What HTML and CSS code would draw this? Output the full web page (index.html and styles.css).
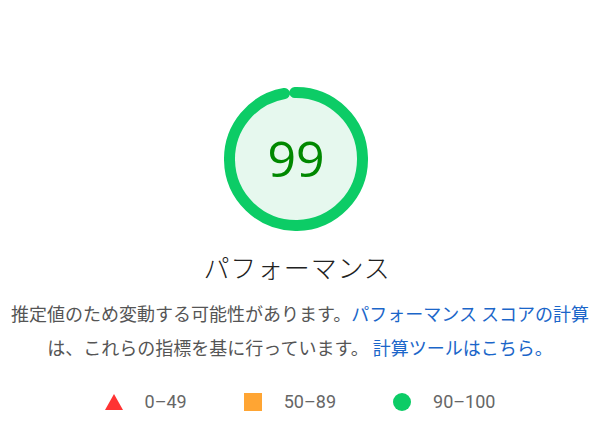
FILE: index.html
```html
<!DOCTYPE html>
<html lang="ja">
<head>
    <meta charset="UTF-8">
    <meta name="viewport" content="width=device-width, initial-scale=1.0">
    <title>パフォーマンス</title>
    <link rel="stylesheet" href="styles.css">
</head>
<body>
    <div class="report">
        <div class="gauge">
            <svg class="gauge-svg" width="144" height="144" viewBox="0 0 144 144">
                <circle class="gauge-base" cx="72" cy="72" r="66.5"></circle>
                <circle class="gauge-arc" cx="72" cy="72" r="66.5" transform="rotate(-91 72 72)"></circle>
            </svg>
            <div class="gauge-value">99</div>
        </div>
        <div class="title">パフォーマンス</div>
        <div class="desc">
            推定値のため変動する可能性があります。<a href="#">パフォーマンス スコアの計算</a>は、これらの指標を基に行っています。 <a href="#">計算ツールはこちら。</a>
        </div>
        <div class="legend">
            <span class="legend-item">
                <svg width="18" height="16" viewBox="0 0 18 16"><polygon points="9,0 18,16 0,16" fill="#f33"></polygon></svg>
                <span>0–49</span>
            </span>
            <span class="legend-item">
                <span class="shape-square"></span>
                <span>50–89</span>
            </span>
            <span class="legend-item">
                <span class="shape-circle"></span>
                <span>90–100</span>
            </span>
        </div>
    </div>
</body>
</html>
```
FILE: styles.css
```css
body {
    margin: 0;
    padding: 0;
    background: #fff;
    font-family: "Noto Sans CJK JP", "Noto Sans", sans-serif;
    color: #212121;
}
.report {
    display: flex;
    flex-direction: column;
    align-items: center;
    padding-top: 87px;
}
.gauge {
    position: relative;
    width: 144px;
    height: 144px;
    margin-right: 8px;
}
.gauge-svg {
    display: block;
}
.gauge-base {
    fill: #e6f8ee;
    stroke: none;
}
.gauge-arc {
    fill: none;
    stroke: #0ccc66;
    stroke-width: 11;
    stroke-linecap: round;
    stroke-dasharray: 406.6 500;
}
.gauge-value {
    position: absolute;
    inset: 0;
    display: flex;
    align-items: center;
    justify-content: center;
    font-family: "Open Sans", sans-serif;
    font-weight: 400;
    font-size: 50px;
    color: #008800;
    padding-bottom: 2px;
}
.title {
    margin-top: 18px;
    margin-right: 6px;
    font-size: 26px;
    font-weight: 300;
    line-height: 36px;
    letter-spacing: 0.8px;
}
.desc {
    margin-top: 11px;
    padding: 0 4px;
    font-size: 18px;
    line-height: 34px;
    text-align: center;
    color: #555;
}
.desc a {
    color: #1b66c9;
    text-decoration: none;
}
.legend {
    display: flex;
    justify-content: center;
    gap: 57px;
    margin-top: 27px;
    font-family: Roboto, sans-serif;
    font-size: 18px;
    color: #666;
}
.legend-item {
    display: flex;
    align-items: center;
    gap: 22px;
}
.shape-square {
    width: 18px;
    height: 18px;
    background: #ffa533;
}
.shape-circle {
    width: 18px;
    height: 18px;
    border-radius: 50%;
    background: #0ccc66;
}
```
